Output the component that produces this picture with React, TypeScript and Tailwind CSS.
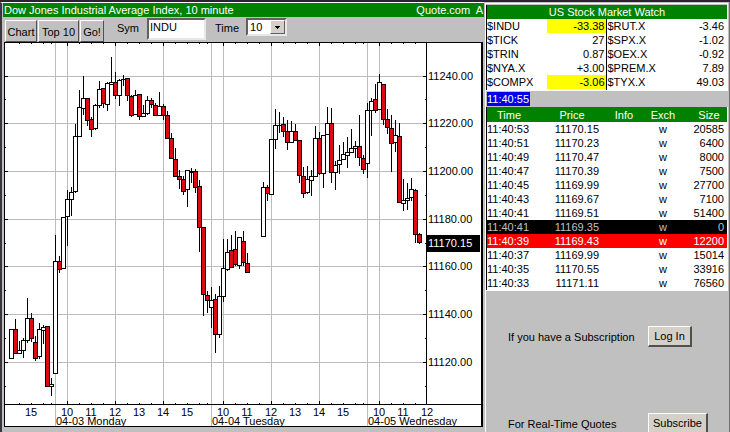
import React from "react";

type Candle = [x: number, high: number, top: number, bottom: number, low: number, down: 0 | 1];

const candles: Candle[] = [
  [11, 329, 329, 358, 358, 0], [15, 319, 329, 353, 353, 1], [19, 341, 350, 353, 353, 0],
  [23, 338, 340, 350, 357, 0], [27, 298, 318, 340, 342, 0], [31, 313, 318, 338, 341, 1],
  [35, 336, 342, 358, 360, 1], [39, 323, 329, 356, 358, 0], [43, 325, 327, 330, 343, 0],
  [47, 326, 326, 386, 386, 1], [51, 378, 384, 386, 395, 0], [55, 235, 261, 373, 373, 0],
  [59, 256, 261, 269, 272, 1], [63, 217, 217, 268, 268, 0], [67, 190, 199, 216, 245, 0],
  [71, 187, 192, 199, 215, 0], [75, 124, 136, 191, 192, 0], [79, 90, 107, 136, 136, 0],
  [83, 76, 98, 108, 114, 0], [87, 98, 98, 120, 125, 1], [91, 117, 119, 129, 136, 1],
  [95, 104, 105, 128, 129, 0], [99, 81, 89, 105, 107, 0], [103, 88, 88, 103, 107, 1],
  [107, 82, 83, 104, 110, 0], [111, 57, 82, 84, 84, 0], [115, 72, 82, 95, 98, 1],
  [119, 79, 80, 95, 105, 0], [123, 75, 79, 79, 85, 0], [127, 78, 78, 95, 100, 1],
  [131, 95, 96, 115, 116, 1], [135, 90, 95, 114, 114, 0], [139, 94, 94, 116, 119, 1],
  [143, 105, 113, 116, 116, 0], [147, 96, 100, 113, 114, 0], [151, 98, 100, 104, 107, 1],
  [155, 103, 105, 115, 115, 1], [159, 92, 106, 115, 115, 0], [163, 104, 106, 115, 119, 1],
  [167, 111, 115, 138, 138, 1], [171, 133, 138, 158, 158, 1], [175, 148, 159, 176, 176, 1],
  [179, 170, 176, 179, 188, 1], [183, 176, 179, 191, 194, 1], [187, 170, 170, 189, 206, 0],
  [191, 168, 171, 172, 182, 0], [195, 169, 171, 187, 192, 1], [199, 180, 186, 227, 251, 1],
  [203, 227, 227, 294, 315, 1], [207, 291, 295, 300, 312, 1], [211, 287, 300, 307, 327, 0],
  [215, 294, 299, 334, 352, 1], [219, 286, 296, 334, 337, 0], [223, 239, 268, 296, 301, 0],
  [227, 239, 252, 269, 270, 0], [231, 235, 250, 267, 267, 1], [235, 231, 249, 264, 265, 1],
  [239, 237, 237, 265, 268, 0], [243, 231, 241, 262, 265, 1], [247, 253, 263, 272, 272, 1],
  [263, 182, 187, 236, 236, 0], [267, 185, 187, 193, 200, 1], [271, 139, 139, 194, 194, 0],
  [275, 109, 125, 139, 148, 0], [279, 112, 125, 125, 132, 0], [283, 117, 124, 131, 136, 1],
  [287, 120, 131, 142, 149, 1], [291, 121, 131, 142, 142, 0], [295, 124, 131, 140, 140, 1],
  [299, 140, 140, 175, 182, 1], [303, 167, 176, 193, 197, 1], [307, 166, 179, 192, 193, 0],
  [311, 170, 176, 180, 195, 0], [315, 126, 138, 176, 176, 0], [319, 132, 138, 173, 174, 1],
  [323, 135, 135, 173, 187, 0], [327, 107, 123, 134, 134, 0], [331, 108, 123, 172, 182, 1],
  [335, 161, 165, 172, 189, 0], [339, 145, 160, 164, 173, 0], [343, 142, 154, 159, 159, 0],
  [347, 137, 152, 155, 167, 0], [351, 129, 148, 152, 152, 0], [355, 141, 146, 148, 157, 0],
  [359, 115, 146, 157, 165, 1], [363, 155, 158, 169, 173, 1], [367, 103, 110, 163, 177, 0],
  [371, 98, 101, 110, 135, 0], [375, 84, 99, 110, 112, 1], [379, 74, 82, 109, 109, 0],
  [383, 84, 84, 119, 124, 1], [387, 109, 119, 127, 133, 1], [391, 115, 128, 143, 171, 1],
  [395, 120, 135, 142, 151, 0], [399, 123, 136, 202, 202, 1], [403, 179, 200, 203, 210, 0],
  [407, 183, 198, 200, 209, 0], [411, 178, 189, 197, 200, 0], [415, 189, 190, 234, 242, 1],
  [419, 233, 234, 242, 243, 1],
];

const prices: [number, string][] = [
  [76, "11240.00"], [123, "11220.00"], [171, "11200.00"], [219, "11180.00"],
  [266, "11160.00"], [314, "11140.00"], [362, "11120.00"],
];
const minorPrices = [99, 147, 195, 243, 290, 338, 386];
const gridX = [55, 67, 115, 163, 211, 223, 271, 319, 367, 379];
const majorX = [67, 115, 163, 223, 271, 319, 379];
const minorX = [
  19, 31, 43, 51, 79, 91, 103, 127, 139, 151, 175, 187, 199, 207, 235, 247, 259, 283, 295, 307,
  331, 343, 355, 363, 391, 403, 415,
];
const hours: [number, string][] = [
  [31, "15"], [67, "10"], [91, "11"], [115, "12"], [139, "13"], [163, "14"], [187, "15"],
  [223, "10"], [247, "11"], [271, "12"], [295, "13"], [319, "14"], [343, "15"],
  [379, "10"], [403, "11"], [427, "12"],
];
const days: [number, string][] = [
  [55, "04-03 Monday"], [211, "04-04 Tuesday"], [367, "04-05 Wednesday"],
];

function Chart() {
  return (
    <svg
      viewBox="3 42 481 385"
      className="block h-auto w-full text-[11px]"
      shapeRendering="crispEdges"
      role="img"
      aria-label="INDU candlestick chart"
    >
      <rect x="4" y="42" width="479" height="385" fill="#000" />
      <rect x="5" y="43" width="476" height="383" fill="#fff" />
      <g fill="#bcbcbc">
        {prices.map(([y]) => <rect key={y} x="5" y={y} width="421" height="1" />)}
        {gridX.map((x) => <rect key={x} x={x} y="43" width="1" height="361" />)}
        {days.map(([x]) => <rect key={x} x={x} y="405" width="1" height="21" />)}
      </g>
      <g fill="#000">
        {prices.map(([y]) => (
          <React.Fragment key={y}>
            <rect x="5" y={y} width="3" height="1" />
            <rect x="423" y={y} width="3" height="1" />
          </React.Fragment>
        ))}
        {minorPrices.map((y) => (
          <React.Fragment key={y}>
            <rect x="5" y={y} width="1" height="1" />
            <rect x="425" y={y} width="1" height="1" />
          </React.Fragment>
        ))}
        {majorX.map((x) => (
          <React.Fragment key={x}>
            <rect x={x} y="43" width="1" height="3" />
            <rect x={x} y="401" width="1" height="3" />
          </React.Fragment>
        ))}
        {minorX.map((x) => (
          <React.Fragment key={x}>
            <rect x={x} y="43" width="1" height="1" />
            <rect x={x} y="403" width="1" height="1" />
          </React.Fragment>
        ))}
        <rect x="426" y="42" width="1" height="363" />
        <rect x="4" y="404" width="477" height="1" />
      </g>
      {candles.map(([x, high, top, bottom, low, down]) => (
        <g key={x}>
          <rect x={x} y={high} width="1" height={low - high + 1} fill="#000" />
          <rect x={x - 2} y={top} width="5" height={bottom - top + 1} fill="#000" />
          <rect x={x - 1} y={top + 1} width="3" height={Math.max(0, bottom - top - 1)} fill={down ? "#dd0a14" : "#fff"} />
        </g>
      ))}
      {prices.map(([y, t]) => <text key={t} x="428" y={y + 4}>{t}</text>)}
      <rect x="427" y="235" width="53" height="17" fill="#000" />
      <text x="428" y="247" fill="#fff">11170.15</text>
      {hours.map(([x, t]) => <text key={x} x={x} y="416" textAnchor="middle">{t}</text>)}
      {days.map(([x, t]) => <text key={t} x={x + 1} y="425">{t}</text>)}
    </svg>
  );
}

const raised =
  "border border-t-white border-l-white border-r-[#505050] border-b-[#505050] text-black";

function Toolbar() {
  return (
    <div className="flex h-[25px] items-start pl-[2px]">
      <div className="flex gap-px pt-[3px]">
        <button className={`${raised} h-[22px] w-8 pt-px`}>Chart</button>
        <button className={`${raised} h-[22px] w-[41px] pt-px`}>Top 10</button>
        <button className={`${raised} h-[22px] w-6 pt-px`}>Go!</button>
      </div>
      <label htmlFor="sym" className="ml-[13px] pt-1">Sym</label>
      <input
        id="sym"
        defaultValue="INDU"
        className="mt-px ml-2 h-[22px] w-[59px] rounded-none border-2 border-t-[#606060] border-r-[#e8e8e8] border-b-[#e8e8e8] border-l-[#606060] bg-white px-px pb-1 outline-none"
      />
      <label htmlFor="time" className="ml-[9px] pt-1">Time</label>
      <div className="relative mt-px ml-[7px]">
        <select
          id="time"
          defaultValue="10"
          className="block h-[18px] w-[41px] appearance-none rounded-none border-2 border-t-[#606060] border-r-[#e8e8e8] border-b-[#e8e8e8] border-l-[#606060] bg-white pl-[2px] outline-none"
        >
          <option>5</option>
          <option>10</option>
          <option>60</option>
        </select>
        <span className="pointer-events-none absolute top-[2px] right-[2px] flex h-[14px] w-[15px] items-center justify-center border border-t-white border-r-[#606060] border-b-[#606060] border-l-white bg-[#d4d0c8]">
          <svg width="5" height="3" shapeRendering="crispEdges" aria-hidden="true">
            <path d="M0 0h5v1H0zM1 1h3v1H1zM2 2h1v1H2z" />
          </svg>
        </span>
      </div>
    </div>
  );
}

const watch = [
  ["$INDU", "-33.38", "$RUT.X", "-3.46"],
  ["$TICK", "27", "$SPX.X", "-1.02"],
  ["$TRIN", "0.87", "$OEX.X", "-0.92"],
  ["$NYA.X", "+3.00", "$PREM.X", "7.89"],
  ["$COMPX", "-3.06", "$TYX.X", "49.03"],
];

function MarketWatch() {
  return (
    <table className="w-full table-fixed border-collapse border-b border-white bg-white">
      <colgroup>
        <col className="w-[60px]" />
        <col className="w-[59px]" />
        <col className="w-[61px]" />
        <col />
      </colgroup>
      <thead>
        <tr className="h-[14px] bg-[#008200] text-white">
          <th colSpan={4} className="p-0 font-normal">US Stock Market Watch</th>
        </tr>
      </thead>
      <tbody>
        {watch.map(([a, av, b, bv]) => (
          <tr key={a} className="h-[14px]">
            <td className="p-0">{a}</td>
            <td className={a === "$INDU" || a === "$COMPX" ? "bg-[#ff0] p-0 pr-px text-right" : "p-0 pr-px text-right"}>{av}</td>
            <td className="border-l border-black p-0 pl-px">{b}</td>
            <td className="p-0 pr-[3px] text-right">{bv}</td>
          </tr>
        ))}
      </tbody>
    </table>
  );
}

const trades = [
  ["11:40:53", "11170.15", "20585"], ["11:40:51", "11170.23", "6400"],
  ["11:40:49", "11170.47", "8000"], ["11:40:47", "11170.39", "7500"],
  ["11:40:45", "11169.99", "27700"], ["11:40:43", "11169.67", "7100"],
  ["11:40:41", "11169.51", "51400"], ["11:40:41", "11169.35", "0"],
  ["11:40:39", "11169.43", "12200"], ["11:40:37", "11169.99", "15014"],
  ["11:40:35", "11170.55", "33916"], ["11:40:33", "11171.11", "76560"],
];

function rowTone(price: string) {
  if (price === "11169.35") return "h-[14px] bg-black text-[#c0c0c0]";
  if (price === "11169.43") return "h-[14px] bg-[#f00] text-white";
  return "h-[14px]";
}

function Trades() {
  return (
    <table className="w-full table-fixed border-collapse bg-white">
      <colgroup>
        <col className="w-[44px]" />
        <col className="w-[82px]" />
        <col className="w-[22px]" />
        <col className="w-[56px]" />
        <col />
      </colgroup>
      <thead>
        <tr className="h-[15px] bg-[#008200] text-white">
          {["Time", "Price", "Info", "Exch", "Size"].map((h) => (
            <th key={h} className="p-0 font-normal">{h}</th>
          ))}
        </tr>
      </thead>
      <tbody>
        {trades.map(([time, price, size]) => (
          <tr key={price + size} className={rowTone(price)}>
            <td className="p-0">{time}</td>
            <td className="p-0 pr-[14px] text-right">{price}</td>
            <td className="p-0" />
            <td className="p-0 text-center">w</td>
            <td className="p-0 pr-[3px] text-right">{size}</td>
          </tr>
        ))}
      </tbody>
    </table>
  );
}

const action =
  "h-[21px] border border-t-white border-l-white border-r-2 border-b-2 border-r-[#505050] border-b-[#505050] bg-[#d4d0c8]";

export default function App() {
  return (
    <div className="h-screen overflow-hidden border-t-2 border-[#2c2230] bg-[#c0c0c0] font-['Liberation_Sans',Arial,sans-serif] text-[11px] leading-[14px] text-black">
      <div className="grid grid-cols-[minmax(0,1fr)_246px]">
        <main className="border-t border-l-2 border-t-white border-l-[#3a343c] pl-px">
          <header className="flex h-[14px] justify-between bg-[#008200] pr-px pl-px whitespace-pre text-white">
            <h1>Dow Jones Industrial Average Index, 10 minute</h1>
            <span>Quote.com  A</span>
          </header>
          <Toolbar />
          <Chart />
        </main>
        <aside className="flex flex-col border-r border-r-[#707070]">
          <section className="mt-px mr-px ml-px border border-white pt-px">
            <div className="border-l border-black">
              <MarketWatch />
            </div>
          </section>
          <div className="mr-px ml-px h-4 border-l border-white pt-px pl-px">
            <time className="inline-block bg-[#0000e8] pr-px text-white">11:40:55</time>
          </div>
          <section className="mr-px ml-px border-r border-b border-l border-white">
            <div className="border-l border-black">
              <Trades />
            </div>
          </section>
          <section className="ml-px border-l border-white pl-[22px]">
            <div className="flex items-center pt-[35px]">
              <p className="w-[140px]">If you have a Subscription</p>
              <button className={`${action} w-[44px]`}>Log In</button>
            </div>
            <div className="flex items-center pt-[66px]">
              <p className="w-[140px]">For Real-Time Quotes</p>
              <button className={`${action} w-[60px]`}>Subscribe</button>
            </div>
          </section>
        </aside>
      </div>
    </div>
  );
}
